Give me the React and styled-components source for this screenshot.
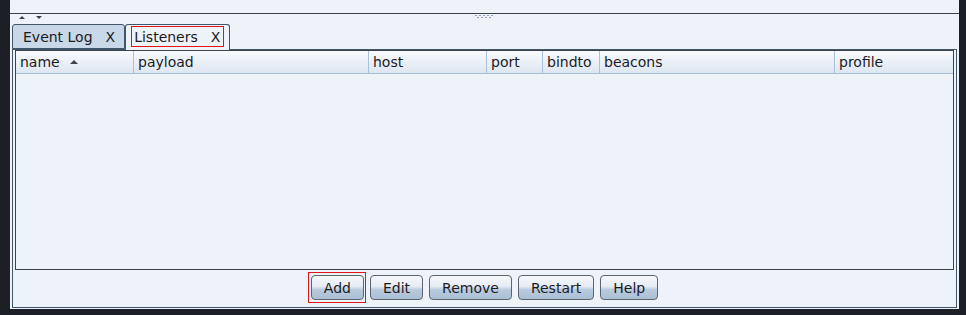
import React from "react";
import styled, { createGlobalStyle } from "styled-components";

const Global = createGlobalStyle`
html, body {
  margin: 0;
  padding: 0;
  background: #1c1f26;
}
body {
  font-family: "DejaVu Sans", "Liberation Sans", sans-serif;
  font-size: 14px;
  color: #1b1b1f;
}
`

const Screen = styled.div`
width: 966px;
height: 315px;
box-sizing: border-box;
padding: 0 7px 6px 10px;
background: #1c1f26;
display: flex;
`

const Window = styled.div`
flex: 1;
background: #eef2f9;
display: flex;
flex-direction: column;
`

const TopStrip = styled.div`
height: 13px;
border-bottom: 1px solid #3e434b;
`

const Splitter = styled.div`
height: 10px;
position: relative;
display: flex;
align-items: flex-start;
padding: 2px 0 0 9px;
gap: 11px;
box-sizing: border-box;
`

const Arrow = styled.span`
width: 0;
height: 0;
border-left: 3px solid transparent;
border-right: 3px solid transparent;
${p => p.up
  ? "border-bottom: 3px solid #3c4047;"
  : "border-top: 3px solid #3c4047;"}
`

const Grip = styled.svg`
position: absolute;
left: 464px;
top: 1px;
`

const TabRow = styled.div`
display: flex;
align-items: flex-end;
padding-left: 2px;
height: 25px;
`

const Tab = styled.div`
box-sizing: border-box;
height: ${p => p.selected ? "26px" : "25px"};
margin-bottom: ${p => p.selected ? "-1px" : "0"};
display: flex;
align-items: center;
padding: ${p => p.selected ? "0 5px 0 5px" : "0 5px 0 7px"};
background: ${p => p.selected ? "#eef2f9" : "#c8d8e8"};
border: 1px solid #40566b;
border-bottom: ${p => p.selected ? "none" : "1px solid #40566b"};
border-radius: 3px 3px 0 0;
position: relative;
z-index: ${p => p.selected ? 2 : 1};
`

const TabInner = styled.div`
display: flex;
align-items: center;
height: 21px;
box-sizing: border-box;
padding: 0 3px 0 2px;
border: 1px solid ${p => p.marked ? "#e0141a" : "transparent"};
margin-top: ${p => p.marked ? "-2px" : "0"};
`

const TabClose = styled.span`
margin-left: 13px;
`

const Panel = styled.div`
box-sizing: border-box;
height: 259px;
margin: 0 2px 0 2px;
border: 1px solid #40566b;
padding: 0 2px 0 2px;
display: flex;
flex-direction: column;
`

const Table = styled.div`
height: 220px;
box-sizing: border-box;
border: 1px solid #3e434b;
display: flex;
flex-direction: column;
`

const Header = styled.div`
display: flex;
height: 23px;
box-sizing: border-box;
background: linear-gradient(#f8fafd, #dde6f1);
border-bottom: 1px solid #a8bfd8;
`

const HeadCell = styled.div`
width: ${p => p.w}px;
flex: ${p => p.grow ? 1 : "none"};
box-sizing: border-box;
padding-left: 4px;
display: flex;
align-items: center;
border-right: ${p => p.last ? "none" : "1px solid #a9c1db"};
`

const SortArrow = styled.span`
margin-left: 10px;
margin-top: -1px;
width: 0;
height: 0;
border-left: 4px solid transparent;
border-right: 4px solid transparent;
border-bottom: 4px solid #3e434b;
`

const Body = styled.div`
flex: 1;
background: #eef2f9;
`

const ButtonBar = styled.div`
display: flex;
justify-content: center;
gap: 6px;
padding-top: 5px;
`

const Button = styled.button`
position: relative;
height: 25px;
padding: 0 12px;
font-family: "DejaVu Sans", "Liberation Sans", sans-serif;
font-size: 14px;
color: #1b1b1f;
border: 1px solid #5c6570;
border-radius: 4px;
background: linear-gradient(#f6f8fb 0%, #e6ecf4 45%, #b9cadd 60%, #aabfd5 100%);
cursor: pointer;

&::after {
  content: "";
  display: ${p => p.marked ? "block" : "none"};
  position: absolute;
  left: -4px;
  top: -4px;
  right: -3px;
  bottom: -4px;
  border: 1px solid #e0141a;
}
`

const columns = [
  { name: "name", w: 118, sort: true },
  { name: "payload", w: 235 },
  { name: "host", w: 118 },
  { name: "port", w: 56 },
  { name: "bindto", w: 57 },
  { name: "beacons", w: 235 },
  { name: "profile", grow: true, last: true },
];

export default function App() {
  return (
    <>
      <Global />
      <Screen>
        <Window>
          <TopStrip />
          <Splitter>
            <Arrow up />
            <Arrow />
            <Grip width="20" height="4" viewBox="0 0 20 4">
              {[0, 1, 2, 3, 4].map(i => (
                <rect key={"a" + i} x={1 + i * 4} y="0" width="2" height="1" fill="#8fa3bd" />
              ))}
              {[0, 1, 2, 3].map(i => (
                <rect key={"b" + i} x={3 + i * 4} y="2" width="2" height="1" fill="#8fa3bd" />
              ))}
            </Grip>
          </Splitter>
          <TabRow>
            <Tab>
              <TabInner>
                Event Log<TabClose>X</TabClose>
              </TabInner>
            </Tab>
            <Tab selected>
              <TabInner marked>
                Listeners<TabClose>X</TabClose>
              </TabInner>
            </Tab>
          </TabRow>
          <Panel>
            <Table>
              <Header>
                {columns.map(c => (
                  <HeadCell key={c.name} w={c.w} grow={c.grow} last={c.last}>
                    {c.name}
                    {c.sort && <SortArrow />}
                  </HeadCell>
                ))}
              </Header>
              <Body />
            </Table>
            <ButtonBar>
              <Button marked>Add</Button>
              <Button>Edit</Button>
              <Button>Remove</Button>
              <Button>Restart</Button>
              <Button>Help</Button>
            </ButtonBar>
          </Panel>
        </Window>
      </Screen>
    </>
  );
}
